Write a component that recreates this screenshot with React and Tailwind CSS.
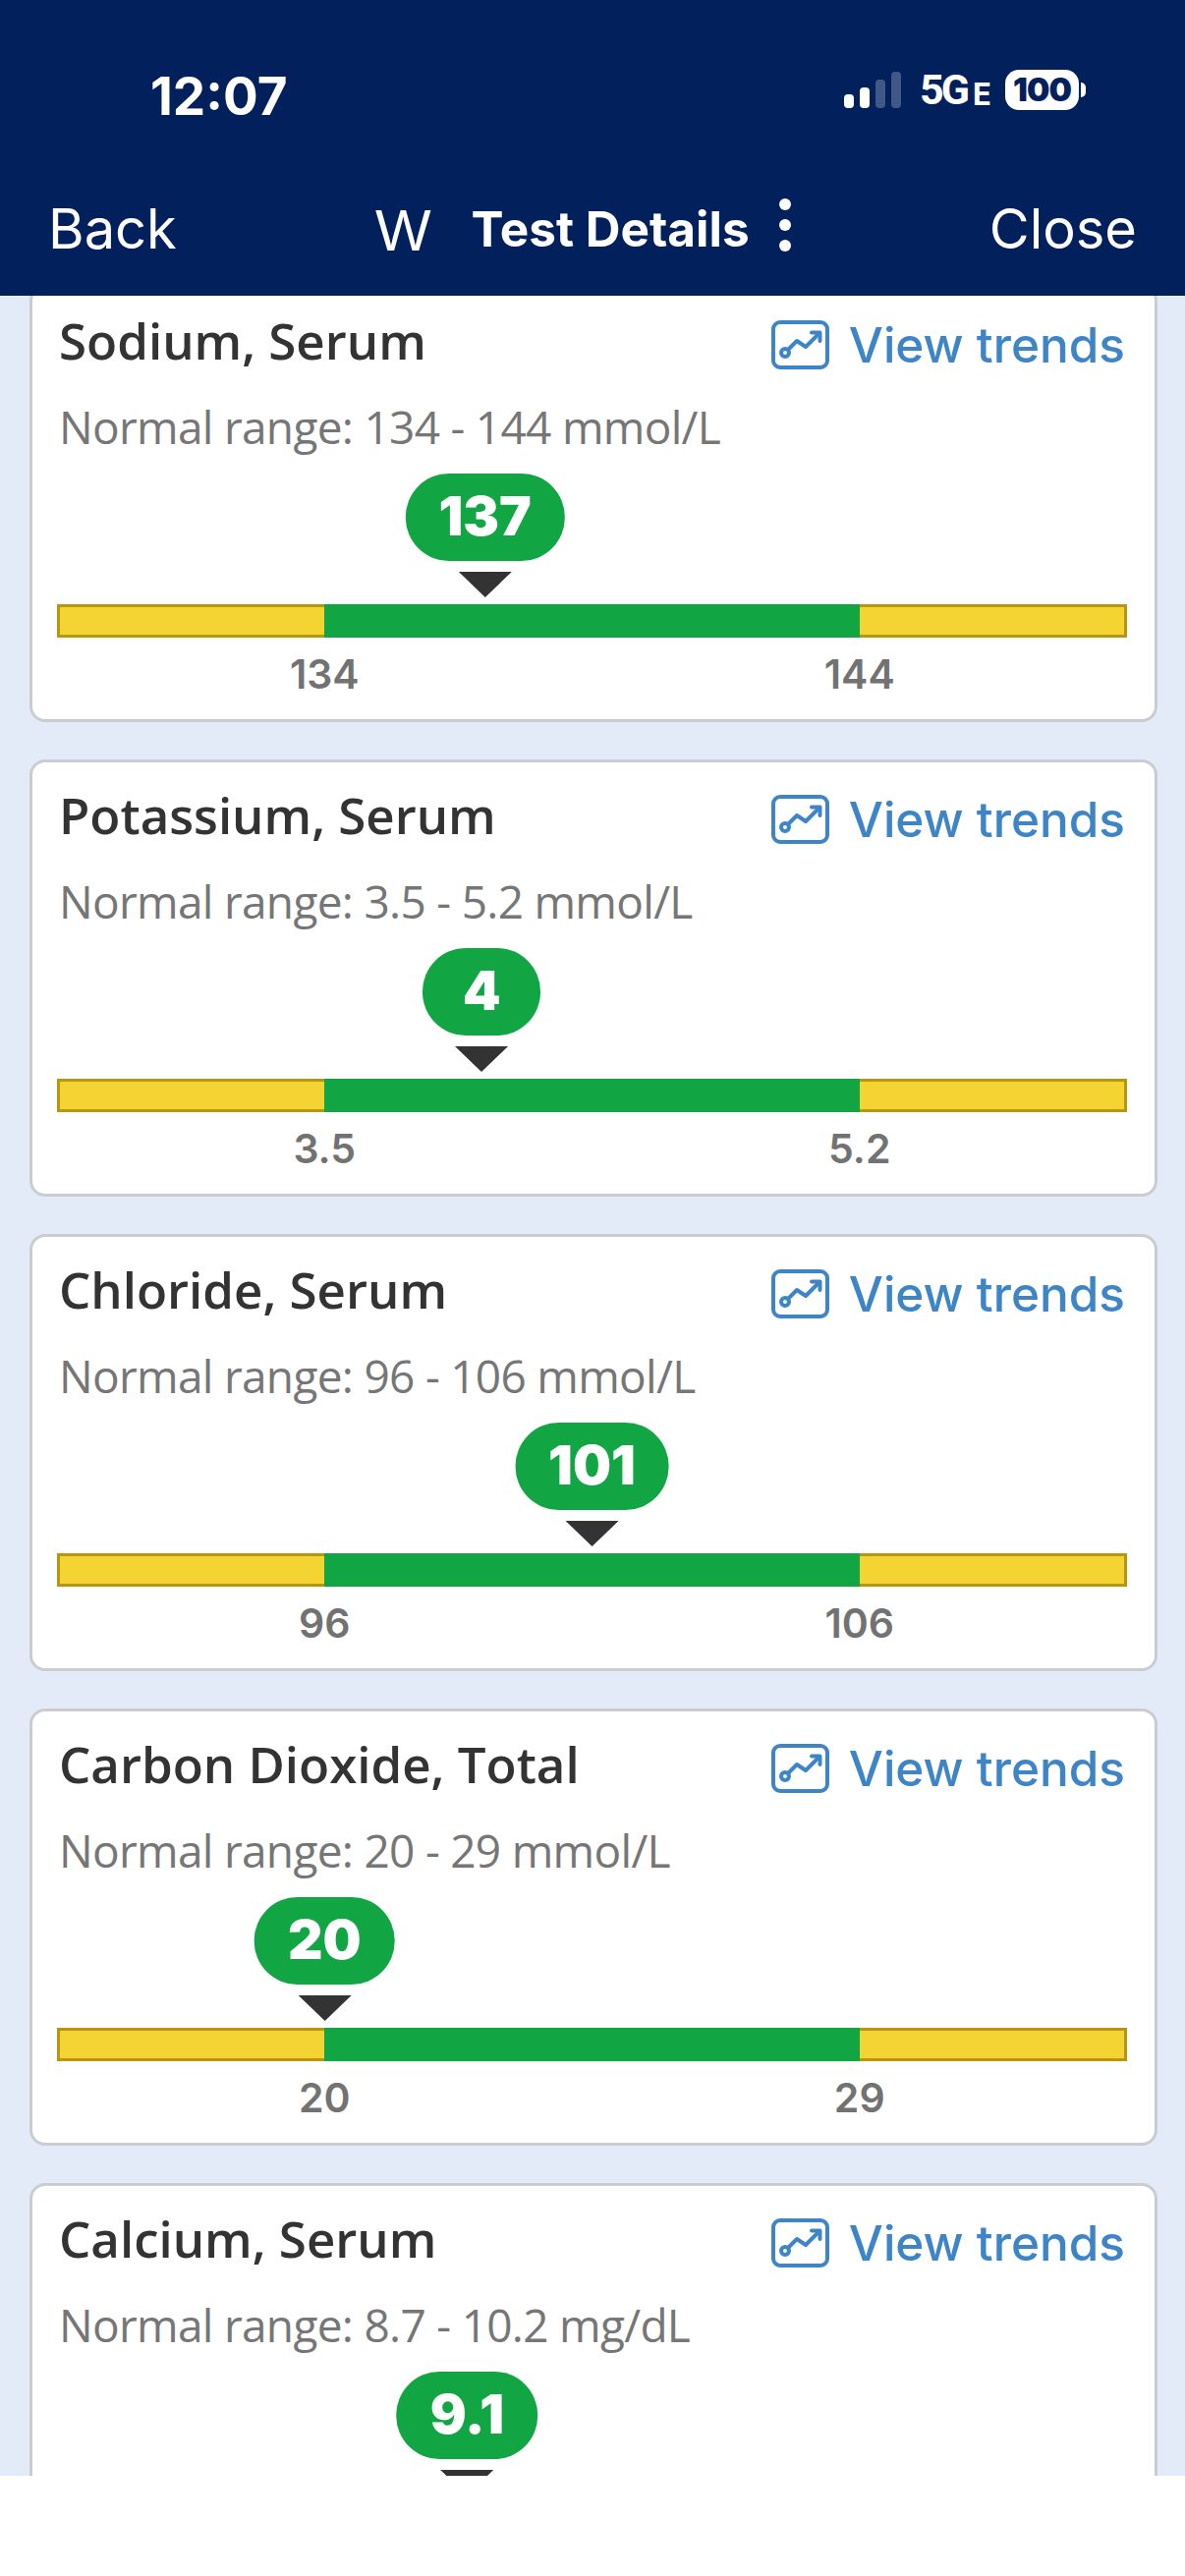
const tests = [
  { name: 'Sodium, Serum', low: 134, high: 144, value: 137, unit: 'mmol/L' },
  { name: 'Potassium, Serum', low: 3.5, high: 5.2, value: 4, unit: 'mmol/L' },
  { name: 'Chloride, Serum', low: 96, high: 106, value: 101, unit: 'mmol/L' },
  { name: 'Carbon Dioxide, Total', low: 20, high: 29, value: 20, unit: 'mmol/L' },
  { name: 'Calcium, Serum', low: 8.7, high: 10.2, value: 9.1, unit: 'mg/dL', partial: true },
];

function TrendIcon() {
  return (
    <svg width="59" height="50" viewBox="0 0 59 50" fill="none" stroke="#3d85c6" strokeWidth="4" strokeLinecap="round" strokeLinejoin="round">
      <rect x="2" y="2" width="55" height="46" rx="7" />
      <circle cx="14" cy="33" r="4" />
      <path d="M17 30 L26 21 L35 27 L48 14" />
      <path d="M41 12.5 H49.5 V21" />
    </svg>
  );
}

function StatusBar() {
  const bars = [
    ['h-[14px]', 'bg-white'],
    ['h-[21px]', 'bg-white'],
    ['h-[29px]', 'bg-white/25'],
    ['h-[37px]', 'bg-white/25'],
  ];

  return (
    <div className="flex h-[154px] items-start justify-between pl-[153px] pr-[101px] pt-[66px] text-white">
      <span className="text-[53px] font-bold leading-[64px] font-['Inter',sans-serif]">12:07</span>
      <div className="flex h-[41px] items-center pt-[10px]">
        <div className="flex h-[37px] items-end gap-[6px]">
          {bars.map(([height, color], i) => (
            <div key={i} className={`w-[10px] rounded-[4px] ${height} ${color}`} />
          ))}
        </div>
        <span className="ml-[19px] w-[48px] whitespace-nowrap text-[43px] font-bold leading-none tracking-[-3px] font-['Roboto',sans-serif]">5G</span>
        <span className="ml-[6px] w-[17px] pt-[7px] text-[31px] font-bold leading-none font-['Inter',sans-serif]">E</span>
        <div className="ml-[16px] flex h-[41px] w-[75px] items-center justify-center rounded-[14px] bg-white">
          <span className="text-[33px] font-black leading-none tracking-[-1px] text-[#01205c] font-['Inter',sans-serif]">100</span>
        </div>
        <div className="ml-[2px] h-[15px] w-[5px] rounded-r-full bg-white" />
      </div>
    </div>
  );
}

function NavBar() {
  return (
    <div className="flex h-[147px] items-start justify-between pl-[49px] pr-[49px] pt-[46px] text-white font-['Inter',sans-serif]">
      <span className="text-[56px] leading-[66px]">Back</span>
      <div className="flex items-start">
        <span className="text-[60px] leading-[70px] font-['Liberation_Sans',sans-serif]">W</span>
        <span className="ml-[41px] text-[49.5px] font-bold leading-[66px]">Test Details</span>
        <div className="ml-[30px] flex flex-col gap-[9px] pt-[2px]">
          <div className="h-[12px] w-[12px] rounded-full bg-white" />
          <div className="h-[12px] w-[12px] rounded-full bg-white" />
          <div className="h-[12px] w-[12px] rounded-full bg-white" />
        </div>
      </div>
      <span className="text-[56px] leading-[66px]">Close</span>
    </div>
  );
}

function ResultCard({ test }) {
  // Normal range occupies the middle half of the bar
  const position = 25 + ((test.value - test.low) / (test.high - test.low)) * 50;

  return (
    <div className="h-[445px] shrink-0 rounded-[16px] border-[3px] border-[#c9ccd0] bg-white pl-[25px] pr-[28px]">
      <div className="flex h-[97px] items-start justify-between pt-[23px]">
        <h2 className="pl-[2px] text-[51px] font-semibold leading-[60px] text-[#333333] font-['Open_Sans',sans-serif]">{test.name}</h2>
        <div className="flex items-center gap-[20px] pr-[2px] pt-[7px]">
          <TrendIcon />
          <span className="text-[49.5px] font-medium leading-[56px] text-[#3d85c6] font-['Inter',sans-serif]">View trends</span>
        </div>
      </div>
      <p className="mt-[1px] h-[91px] pl-[2px] pt-[15px] text-[46px] leading-[56px] tracking-[-0.7px] text-[#767676] font-['Open_Sans',sans-serif]">
        Normal range: {test.low} - {test.high} {test.unit}
      </p>
      <div className="relative h-[133px]">
        <div
          className="absolute top-0 flex -translate-x-1/2 flex-col items-center"
          style={{ left: `${position}%` }}
        >
          <div className="flex h-[89px] min-w-[120px] items-center justify-center rounded-[44px] bg-[#12a544] px-[34px] pb-[3px] text-[55px] font-black leading-none text-white font-['Inter',sans-serif]">
            {test.value}
          </div>
          <div className="mt-[11px] h-0 w-0 border-x-[27px] border-t-[26px] border-x-transparent border-t-[#333333]" />
        </div>
      </div>
      {!test.partial && (
        <>
          <div className="flex h-[34px]">
            <div className="w-1/4 border-[3px] border-r-0 border-[#b8960f] bg-[#f3d433]" />
            <div className="w-1/2 bg-[#12a544]" />
            <div className="w-1/4 border-[3px] border-l-0 border-[#b8960f] bg-[#f3d433]" />
          </div>
          <div className="flex pt-[13px] text-[41px] font-semibold leading-[48px] text-[#727272] font-['Inter',sans-serif]">
            <div className="flex w-1/2 justify-center">{test.low}</div>
            <div className="flex w-1/2 justify-center">{test.high}</div>
          </div>
        </>
      )}
    </div>
  );
}

export default function App() {
  return (
    <div className="flex h-[2622px] w-[1206px] flex-col overflow-hidden bg-white">
      <header className="h-[301px] shrink-0 bg-[#01205c]">
        <StatusBar />
        <NavBar />
      </header>
      <main className="h-[2219px] overflow-hidden bg-[#e4ebf8] pl-[30px] pr-[28px]">
        <div className="-mt-[11px] flex flex-col gap-[38px]">
          {tests.map((test) => (
            <ResultCard key={test.name} test={test} />
          ))}
        </div>
      </main>
    </div>
  );
}
